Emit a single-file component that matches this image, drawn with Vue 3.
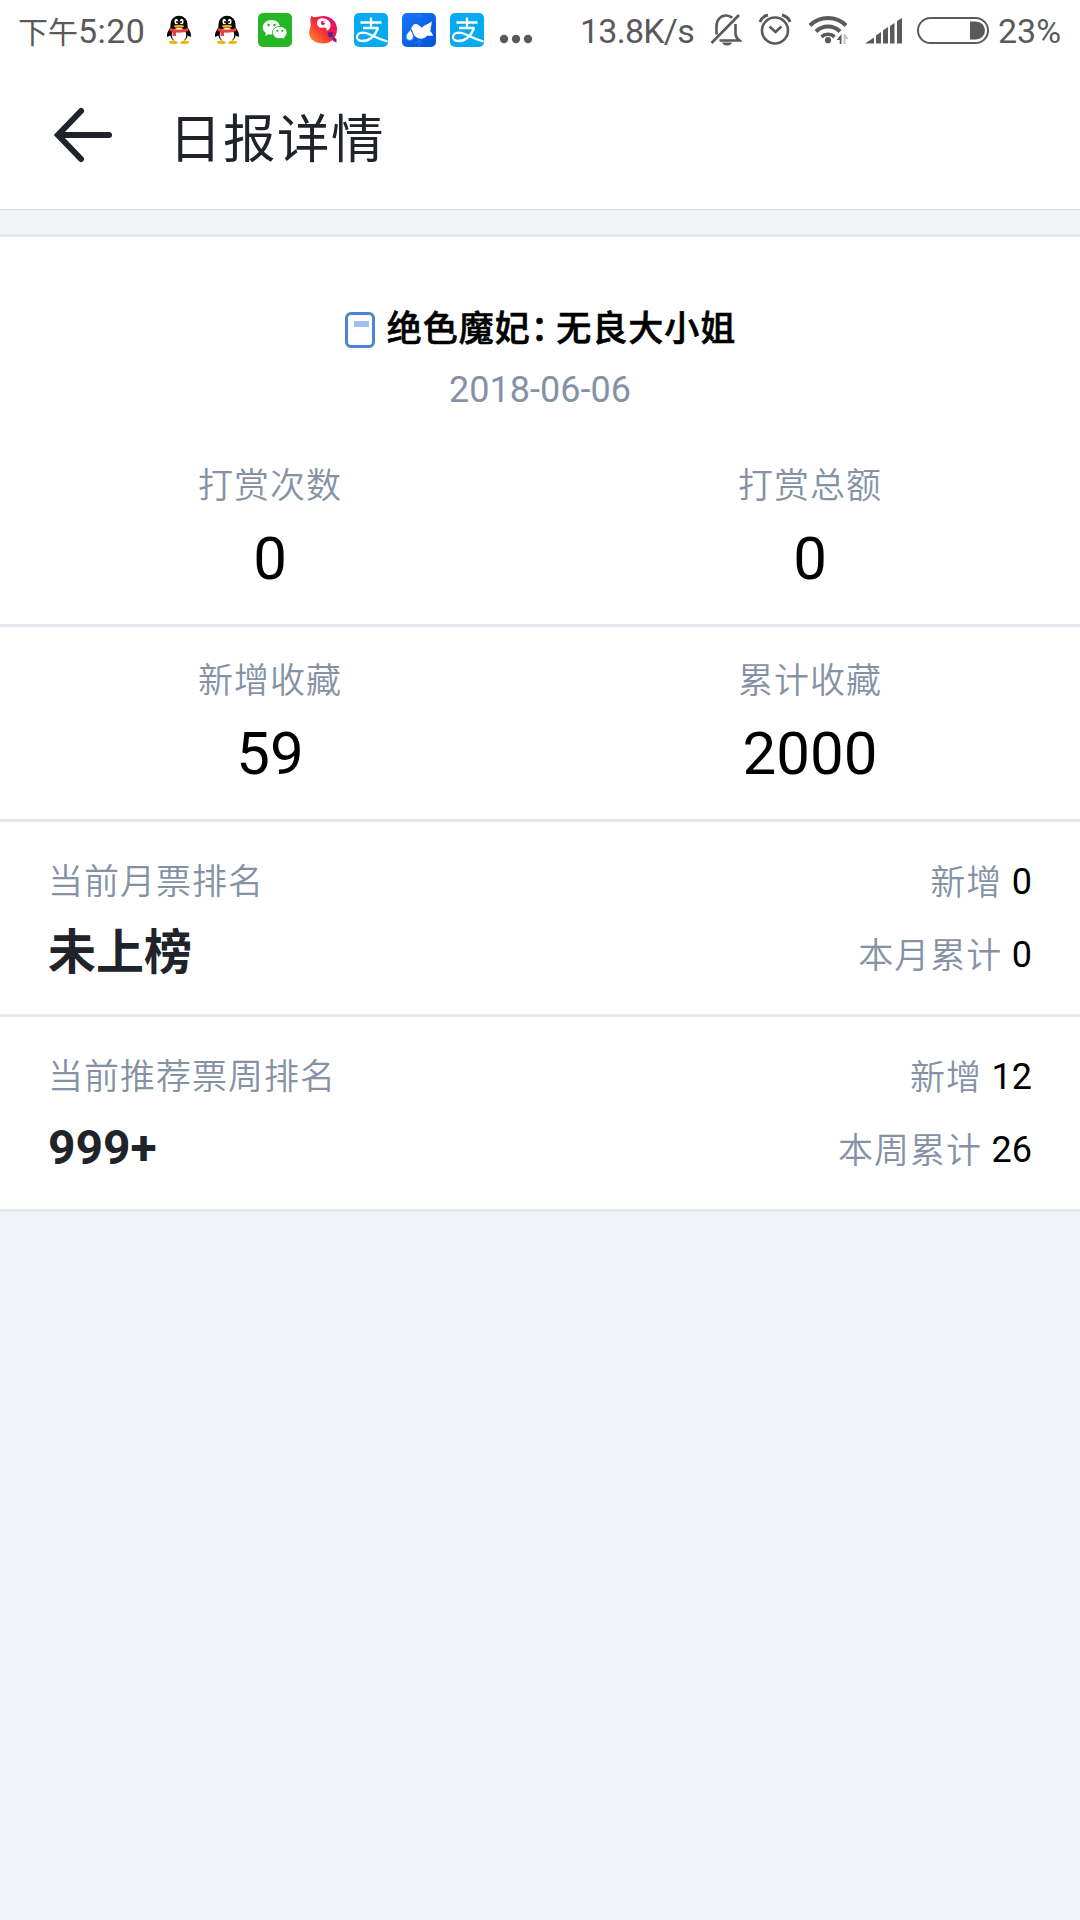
<script setup>
const totals = [
  [
    { label: '打赏次数', value: '0' },
    { label: '打赏总额', value: '0' },
  ],
  [
    { label: '新增收藏', value: '59' },
    { label: '累计收藏', value: '2000' },
  ],
]

const ranks = [
  { label: '当前月票排名', rank: '未上榜', added: '0', sumLabel: '本月累计', sum: '0' },
  { label: '当前推荐票周排名', rank: '999+', added: '12', sumLabel: '本周累计', sum: '26' },
]

const apps = ['qq', 'qq', 'wechat', 'parrot', 'alipay', 'bird', 'alipay']
</script>

<template>
  <div class="page">
    <div class="status">
      <div class="clock"><span class="ampm">下午</span><span>5:20</span></div>
      <div class="apps">
        <svg v-for="(app, i) in apps" :key="i" width="34" height="34" viewBox="0 0 34 34">
          <g v-if="app === 'qq'">
            <ellipse cx="11.500" cy="29.300" rx="4.500" ry="1.800" fill="#f5b400" />
            <ellipse cx="22.500" cy="29.300" rx="4.500" ry="1.800" fill="#f5b400" />
            <path d="M9 13C6.500 18 4 20.500 5.300 24l3-1.500c1.500 8.500 15.900 8.500 17.400 0l3 1.500c1.300-3.500-1.200-6-3.700-11Z" fill="#050505" />
            <path d="M8.500 16v-5a8.500 8.300 0 0 1 17 0v5Z" fill="#050505" />
            <ellipse cx="17" cy="22" rx="7.300" ry="7.300" fill="#fff" />
            <ellipse cx="14.300" cy="8.500" rx="1.900" ry="2.700" fill="#fff" />
            <ellipse cx="19.700" cy="8.500" rx="1.900" ry="2.700" fill="#fff" />
            <circle cx="15" cy="9" r="1" fill="#000" />
            <circle cx="19" cy="9" r="1" fill="#000" />
            <ellipse cx="17" cy="13.300" rx="5" ry="1.500" fill="#f5a800" />
            <path d="M8 14.800q9 4 18 0l.5 3.200q-6 2.300-12.500 1.600V23h-3.500v-4.200l-3-.8Z" fill="#e8403c" />
          </g>
          <g v-else-if="app === 'wechat'">
            <rect width="34" height="34" rx="5" fill="#23b723" />
            <path d="M13.500 7C8.500 7 4.800 10.200 4.800 14.300c0 2.400 1.200 4.300 3.100 5.700l-.9 2.900 3.300-1.700c1 .3 2.100.4 3.200.4 5 0 8.700-3.200 8.700-7.300S18.500 7 13.500 7Z" fill="#fff" />
            <circle cx="10.700" cy="12" r="1.300" fill="#23b723" />
            <circle cx="16.500" cy="12" r="1.300" fill="#23b723" />
            <path d="M21.800 13.400c-4.200 0-7.400 2.800-7.400 6.200s3.200 6.200 7.400 6.200c.9 0 1.700-.1 2.500-.4l2.800 1.500-.7-2.500c1.700-1.200 2.700-2.900 2.700-4.800 0-3.400-3.100-6.200-7.300-6.200Z" fill="#fff" stroke="#23b723" stroke-width="1" />
            <circle cx="19.400" cy="17.800" r="1.100" fill="#23b723" />
            <circle cx="24.300" cy="17.800" r="1.100" fill="#23b723" />
          </g>
          <g v-else-if="app === 'parrot'">
            <defs>
              <linearGradient id="plume" x1="1" y1="0" x2="0" y2="1">
                <stop offset="0" stop-color="#e5007f" />
                <stop offset=".5" stop-color="#f5273c" />
                <stop offset="1" stop-color="#ff9a1e" />
              </linearGradient>
            </defs>
            <path d="M5.500 3C8 5 10 4 13 3.500 22 1 31 7 31 16c0 9-6 14.500-13.500 14.500C10 30.500 5 27.500 3.500 22 2 17 6 13 4.500 10 4 7 4.500 5 5.500 3Z" fill="url(#plume)" />
            <path d="M11 10c0-4 4-5.500 7-4.500 4.500.5 7 4 6.500 7.500-.3 2.500-2 4.500-4 4.700.5-2.200-.5-3.200-2.500-3.200-3.500 1.500-7-.8-7-4.500Z" fill="#fff" />
            <circle cx="17" cy="10" r="2" fill="#d3104c" />
            <circle cx="18" cy="9.500" r=".8" fill="#fff" />
            <circle cx="24.500" cy="21.500" r="2.800" fill="#67208b" />
            <path d="m26 23 4.500 3v3.500L27 28Z" fill="#7b218b" />
          </g>
          <g v-else-if="app === 'alipay'">
            <rect width="34" height="34" rx="5" fill="#06aaf0" />
            <g fill="none" stroke="#fff" stroke-width="2.300">
              <path d="M6.500 9.500h21M17 4.500v10.500M9 15h15.500" />
              <path d="M24 15C20.500 24 15 28 8.500 28 4.500 28 2.500 26 3 23.300c.6-3 4.500-4.600 9-3.300 5 1.400 10.500 5.500 21.500 8.500" />
            </g>
          </g>
          <g v-else>
            <defs>
              <linearGradient id="sky" x1="0" y1="0" x2="1" y2="1">
                <stop offset="0" stop-color="#1677f4" />
                <stop offset="1" stop-color="#0750dc" />
              </linearGradient>
            </defs>
            <rect width="34" height="34" rx="5" fill="url(#sky)" />
            <path d="M13 3h8m-4-3v5M13 31l4-4 4 4m-4-3v6" fill="none" stroke="#2f83f5" stroke-width=".7" />
            <path d="M8.500 15.500c2-1 2-4.500 5-4.500 3 0 4.500 2.800 6.500 3.500 2.500-2.500 6.500-3.500 9.500-6 .5 2-.2 4.500-1 6 .6 1.200.4 2.300-.3 3.500 1 1.300 2.300 2.700 3 4.500-2 .3-4 .2-5.700 0-3 4-10 4.500-13.500-.5-1.500-2-1-5-3.500-6.500Z" fill="#fff" />
            <path d="M8.500 15c0 3.500-4.500 5-4.500 8.700a3.700 3.700 0 0 0 7.400 0c0-3.700-2.900-5.200-2.900-8.700Z" fill="#fff" stroke="#0d5fe6" stroke-width=".7" />
          </g>
        </svg>
      </div>
      <svg class="more" width="34" height="10" viewBox="0 0 34 10" fill="#5a5a5a">
        <circle cx="5" cy="5" r="4.200" />
        <circle cx="17" cy="5" r="4.200" />
        <circle cx="29" cy="5" r="4.200" />
      </svg>
      <div class="speed">13.8K/s</div>
      <svg class="bell" width="32" height="34" viewBox="0 0 32 34" fill="none" stroke="#5a5a5a" stroke-width="2.600">
        <path d="M1.500 30 29 2" />
        <path d="M6.500 21.500V13c0-6 4-10.500 9.500-10.500 2.500 0 4.700.8 6.200 2.200" />
        <path d="M25.500 11v9.500c0 3 1.500 5 4 7H9.500" />
        <path d="M12 29.500h10c-1 4-9 4-10 0Z" fill="#5a5a5a" stroke="none" />
      </svg>
      <svg class="alarm" width="34" height="34" viewBox="0 0 34 34" fill="none" stroke="#5a5a5a">
        <circle cx="17" cy="18.500" r="13" stroke-width="2.600" />
        <path d="m11.500 14.500 6 5.500 6-5.500" stroke-width="2.600" />
        <path d="M2 10c1-3 4-6 8-7M32 10c-1-3-4-6-8-7" stroke-width="3" />
      </svg>
      <svg class="wifi" width="42" height="32" viewBox="0 0 42 32" fill="none" stroke="#5a5a5a" stroke-width="4">
        <path d="M2 11.500a25.500 25.500 0 0 1 36 0" />
        <path d="M8 17.500a17 17 0 0 1 24 0" />
        <path d="M13.500 23a9.300 9.300 0 0 1 13 0" stroke-width="3.500" />
        <circle cx="20" cy="26.200" r="3.100" fill="#5a5a5a" stroke="none" />
        <path d="M33.500 20v10h-1.800v-4h-3Z" fill="#5a5a5a" stroke="none" />
        <path d="M35.500 30V20h1.500l3.500 5h-3v5Z" fill="#c4c4c4" stroke="none" />
      </svg>
      <svg class="signal" width="38" height="26" viewBox="0 0 38 26" fill="#5a5a5a">
        <path d="m0 25.500 9-6v6ZM11 17.500l5-3.500v11.500h-5ZM18 12.500l5-3.500v16.500h-5ZM25 8l4.500-3v20.500H25ZM32 3l5-3v25.500h-5Z" />
      </svg>
      <svg class="battery" width="72" height="27" viewBox="0 0 72 27">
        <rect x="1" y="1" width="70" height="25" rx="12.500" fill="none" stroke="#5a5a5a" stroke-width="2" />
        <path d="M53 4.500h6a9 9 0 0 1 0 18h-6Z" fill="#5a5a5a" />
      </svg>
      <div class="percent">23%</div>
    </div>

    <header class="bar">
      <svg class="back" width="60" height="56" viewBox="0 0 60 56" fill="none" stroke="#20242a" stroke-width="6" stroke-linecap="round" stroke-linejoin="miter">
        <path d="M55 28H6" />
        <path d="M27 4 4 28l23 24" />
      </svg>
      <h1>日报详情</h1>
    </header>

    <main class="sheet">
      <section class="overview">
        <div class="book">
          <svg width="30" height="36" viewBox="0 0 30 36">
            <rect x="1.500" y="1.500" width="27" height="33" rx="4.500" fill="none" stroke="#4a83d9" stroke-width="3" />
            <rect x="9" y="9" width="15" height="6" fill="#9fc0ef" />
          </svg>
          <h2>绝色魔妃<span class="colon">：</span>无良大小姐</h2>
        </div>
        <div class="date">2018-06-06</div>
      </section>
      <section v-for="(row, i) in totals" :key="i" class="totals">
        <div v-for="cell in row" :key="cell.label" class="cell">
          <div class="label">{{ cell.label }}</div>
          <div class="value">{{ cell.value }}</div>
        </div>
      </section>
      <section v-for="item in ranks" :key="item.label" class="rank">
        <div class="left">
          <div class="label">{{ item.label }}</div>
          <strong>{{ item.rank }}</strong>
        </div>
        <div class="right">
          <div class="label">新增 <b>{{ item.added }}</b></div>
          <div class="label">{{ item.sumLabel }} <b>{{ item.sum }}</b></div>
        </div>
      </section>
    </main>
  </div>
</template>

<style>
body {
  margin: 0;
  background: #f1f5fa;
}
</style>

<style scoped>
.page {
  width: 1080px;
  min-height: 1920px;
  background: #f1f5fa;
  font-family: Roboto, "Noto Sans CJK SC", sans-serif;
  color: #000;
}
svg {
  display: block;
  flex: none;
}
.status {
  display: flex;
  align-items: flex-start;
  height: 60px;
  background: #fff;
  color: #5a5a5a;
  font-size: 34px;
  line-height: 62px;
  white-space: nowrap;
}
.clock {
  width: 144px;
  padding-left: 18px;
  box-sizing: border-box;
  letter-spacing: 0.4px;
}
.ampm {
  font-size: 30px;
  letter-spacing: 0;
}
.apps {
  display: flex;
  gap: 14px;
  margin: 13px 0 0 18px;
}
.more { margin: 34px 0 0 15px; }
.speed {
  width: 113px;
  margin-left: 47px;
  letter-spacing: -0.75px;
}
.bell { margin: 13px 0 0 17px; }
.alarm { margin: 12px 0 0 16px; }
.wifi { margin: 14px 0 0 16px; }
.signal { margin: 18px 0 0 15px; }
.battery { margin: 17px 0 0 14px; }
.percent {
  margin-left: 9px;
}
.bar {
  display: flex;
  align-items: center;
  height: 149px;
  background: #fff;
  border-bottom: 1px solid #dcdcdf;
}
.back { margin: 1px 0 0 54px; }
h1 {
  margin: 11px 0 0 55px;
  font-size: 52.5px;
  letter-spacing: 1.5px;
  line-height: 80px;
  font-weight: 400;
  color: #20242a;
}
.sheet {
  margin-top: 24px;
  border-top: 3px solid #e7e8ed;
  background: #fff;
}
.overview {
  height: 195px;
  padding-top: 68px;
  box-sizing: border-box;
  text-align: center;
}
.book {
  display: flex;
  justify-content: center;
  align-items: center;
  gap: 12px;
  height: 50px;
  padding-left: 1px;
}
h2 {
  margin: 0;
  font-size: 35px;
  letter-spacing: 1px;
  line-height: 50px;
  font-weight: 500;
  -webkit-text-stroke: 0.6px #000;
}
.colon {
  letter-spacing: -9.500px;
}
.date {
  margin-top: 10px;
  line-height: 50px;
  font-size: 36px;
  color: #8592a6;
}
.totals {
  display: flex;
  height: 192px;
  border-bottom: 3px solid #e7e8ed;
  text-align: center;
}
.cell {
  flex: 1;
  padding-top: 30px;
}
.label {
  font-size: 35px;
  letter-spacing: 1px;
  line-height: 50px;
  font-weight: 350;
  color: #8592a6;
}
.value {
  margin-top: 12px;
  font-size: 60px;
  line-height: 70px;
}
.rank {
  display: flex;
  justify-content: space-between;
  height: 192px;
  padding: 0 48px;
  border-bottom: 3px solid #e7e8e9;
}
.left {
  padding-top: 36px;
}
strong {
  display: block;
  margin-top: 15px;
  font-size: 48px;
  line-height: 60px;
  font-weight: 700;
  color: #20242a;
}
.right {
  display: flex;
  flex-direction: column;
  gap: 22px;
  padding-top: 36px;
  text-align: right;
}
.right b {
  position: relative;
  top: -1px;
  font-size: 36px;
  letter-spacing: 0;
  font-weight: 400;
  color: #000;
}
</style>
